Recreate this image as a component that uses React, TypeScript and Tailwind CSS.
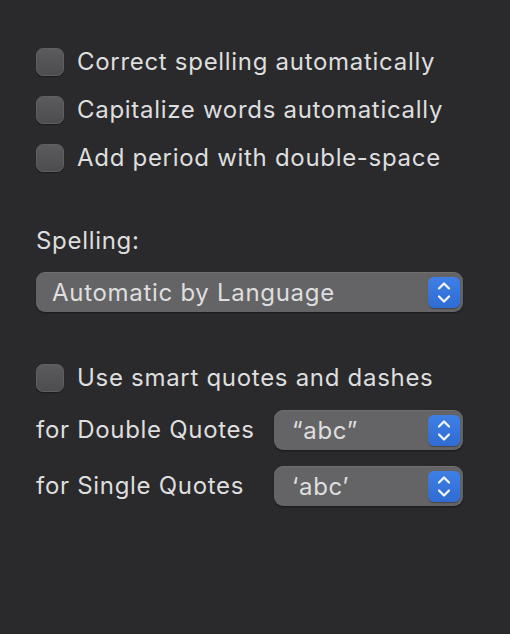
import React from 'react';

const Checkbox = () => (
  <span className="w-7 h-7 shrink-0 rounded-[7px] bg-gradient-to-b from-[#5b5b5d] to-[#4d4d4f] border border-[#5f5f61] shadow-[0_1px_1px_rgba(0,0,0,0.35)]" />
);

const Chevrons = () => (
  <span className="w-8 h-[31px] shrink-0 rounded-[6px] bg-gradient-to-b from-[#3f80e6] to-[#2f6bd2] shadow-[0_1px_1px_rgba(0,0,0,0.3)] flex items-center justify-center">
    <svg width="32" height="31" viewBox="0 0 32 31" fill="none">
      <path d="M11 11.5 L16 6.5 L21 11.5" stroke="#f2f5fb" strokeWidth="2.2" strokeLinecap="round" strokeLinejoin="round" />
      <path d="M11 19.5 L16 24.5 L21 19.5" stroke="#f2f5fb" strokeWidth="2.2" strokeLinecap="round" strokeLinejoin="round" />
    </svg>
  </span>
);

const Popup = ({ label, className }: { label: string; className: string }) => (
  <div
    className={`h-10 rounded-[9px] bg-[#646466] border-t border-[#707072] shadow-[0_1px_2px_rgba(0,0,0,0.4)] flex items-center justify-between pr-[3px] ${className}`}
  >
    <span>{label}</span>
    <Chevrons />
  </div>
);

const CheckRow = ({ label }: { label: string }) => (
  <label className="h-12 flex items-center gap-[13px]">
    <Checkbox />
    <span>{label}</span>
  </label>
);

const App = () => {
  return (
    <div
      className="w-[510px] h-[634px] bg-[#2a2a2c] text-[#dededf] text-[24px] tracking-[0.7px] px-9 pt-[38px]"
      style={{ fontFamily: 'Inter, "Noto Sans", sans-serif' }}
    >
      <div className="flex flex-col">
        <CheckRow label="Correct spelling automatically" />
        <CheckRow label="Capitalize words automatically" />
        <CheckRow label="Add period with double-space" />
      </div>

      <div className="mt-[45px] h-7 flex items-center">Spelling:</div>
      <Popup label="Automatic by Language" className="mt-[17px] w-[427px] pl-4" />

      <div className="mt-[42px]">
        <CheckRow label="Use smart quotes and dashes" />
      </div>

      <div className="mt-2 flex items-center justify-between w-[427px]">
        <span>for Double Quotes</span>
        <Popup label="“abc”" className="w-[189px] pl-[18px]" />
      </div>
      <div className="mt-4 flex items-center justify-between w-[427px]">
        <span>for Single Quotes</span>
        <Popup label="‘abc’" className="w-[189px] pl-[18px]" />
      </div>
    </div>
  );
};

export default App;
